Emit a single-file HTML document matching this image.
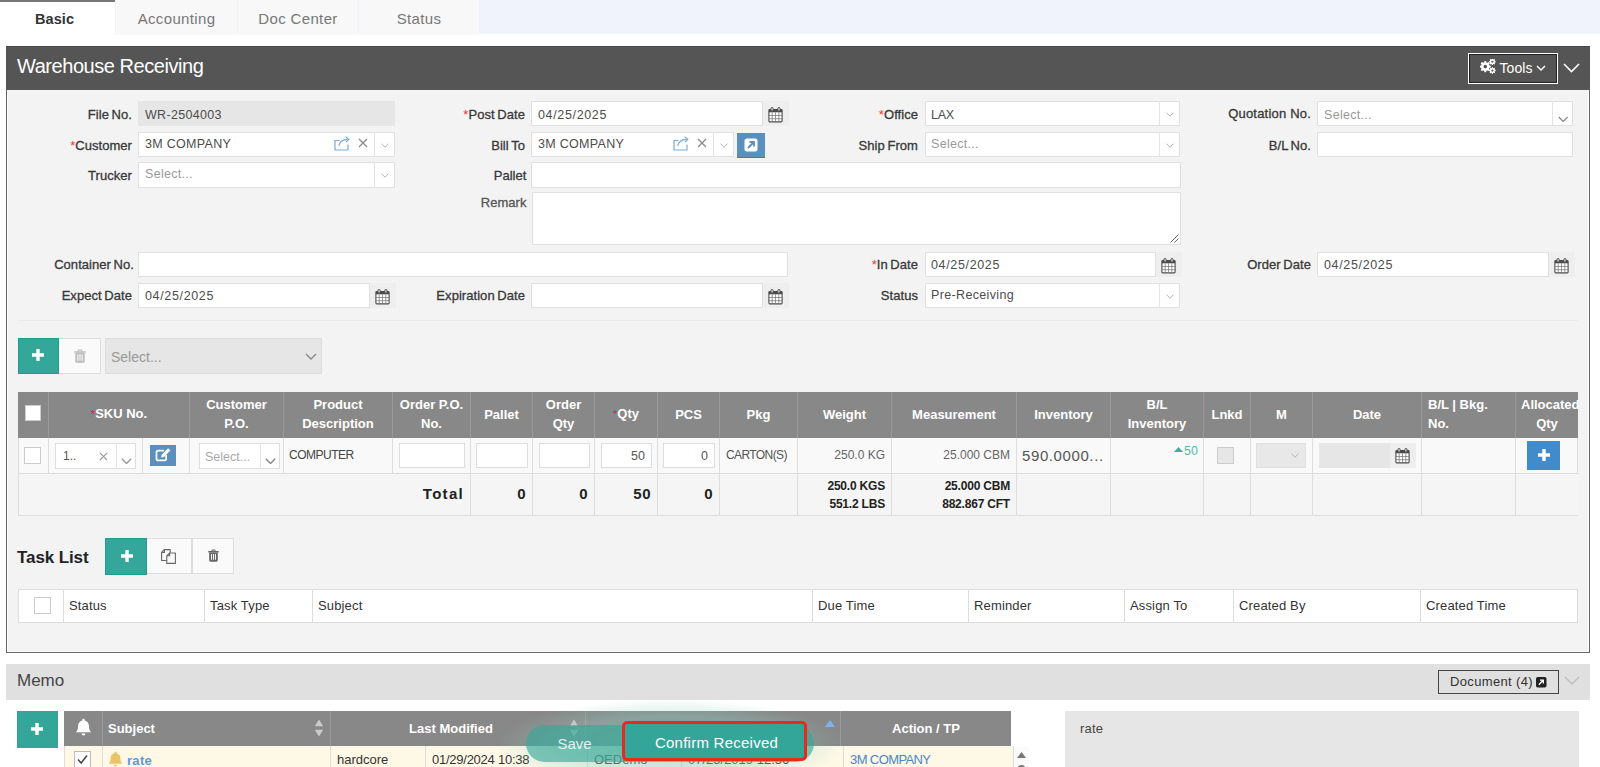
<!DOCTYPE html>
<html>
<head>
<meta charset="utf-8">
<title>Warehouse Receiving</title>
<style>
*{box-sizing:border-box;margin:0;padding:0}
html,body{width:1600px;height:767px;overflow:hidden;background:#fff}
body{font-family:"Liberation Sans",sans-serif;font-size:13px;color:#333;position:relative}
.abs{position:absolute}
#tabbar{left:0;top:0;width:1600px;height:34px;background:#f0f3fb}
.tab{position:absolute;top:0;height:35px;background:#f8f8f8;color:#777;font-size:15px;line-height:38px;text-align:center;letter-spacing:.35px}
.tab.act{background:#fff;color:#333;font-weight:bold;border-top:2px solid #777;line-height:35px;font-size:14.5px;letter-spacing:.1px;padding-right:6px}
#panel{left:6px;top:46px;width:1584px;height:607px;background:#f3f3f3;border:1px solid #666;border-top:0;box-shadow:inset 0 0 0 1px #fff}
#phead{left:6px;top:46px;width:1584px;height:44px;background:#555;border-top:1px solid #484848}
#ptitle{left:17px;top:45px;height:45px;line-height:43px;color:#fff;font-size:20px;letter-spacing:-.45px}
.lb{position:absolute;height:25px;line-height:25px;margin-top:1px;text-align:right;font-size:13px;-webkit-text-stroke:.3px #383838;color:#383838;white-space:nowrap;word-spacing:-1px;letter-spacing:.05px}
.lb i{font-style:normal;color:#e33;-webkit-text-stroke:0}
.in{position:absolute;height:25px;background:#fff;border:1px solid #e0e0e0;font-size:12.5px;line-height:22px;padding-left:6px;padding-top:2px;color:#4c4c4c;white-space:nowrap;overflow:hidden;letter-spacing:.3px}
.in.ro{background:#e6e6e6;border-color:#e6e6e6}
.in.ph{color:#999}
.in.s2{padding-top:0;line-height:22px}
.in.dt{letter-spacing:.65px}
.sel:after{content:"";position:absolute;right:19px;top:0;bottom:0;width:1px;background:#e4e4e4}
.chev{position:absolute;width:8px;height:5px;margin-left:.5px}
.cal{position:absolute;width:26px;height:25px;background:#eee}
.th{position:absolute;top:392px;height:46px;background:#888;color:#fff;font-weight:bold;font-size:13px;line-height:19px;text-align:center;border-left:1px solid #9a9a9a;display:flex;align-items:center;justify-content:center;overflow:hidden;white-space:nowrap;padding-bottom:2px}
.th i{font-style:normal;color:#f06;font-weight:normal;font-size:11px}
.td{position:absolute;top:438px;height:36px;background:#f9f9f9;border-left:1px solid #ddd;border-bottom:1px solid #ddd}
.tx{position:absolute;top:438px;line-height:35px;font-size:12px;white-space:nowrap}
.tf{position:absolute;top:474px;height:42px;background:#f5f5f5;border-left:1px solid #ddd;border-bottom:1px solid #ddd;font-weight:bold;color:#222;white-space:nowrap;overflow:hidden;text-align:right}
.gi{position:absolute;top:443px;height:25px;background:#fff;border:1px solid #ddd;font-size:12.5px;line-height:23px;padding-top:1px;color:#555;text-align:right;padding-right:6px}
.tn{font-size:15px;line-height:40px;padding-right:6px;letter-spacing:.5px}
.tw{font-size:12px;line-height:17.5px;padding-right:6px;padding-top:4px;letter-spacing:-.2px}
.tk{position:absolute;top:589px;height:34px;background:#fff;border:1px solid #ddd;border-left:0;font-size:13px;line-height:32px;color:#333;padding-left:5px;letter-spacing:.15px}
.mh{position:absolute;top:711px;height:35px;background:#888;color:#fff;font-weight:bold;font-size:13px;line-height:35px;border-left:1px solid #9a9a9a;white-space:nowrap}
.mr{position:absolute;top:746px;height:21px;background:#fef8e7;border-left:1px solid #ddd;font-size:13px;line-height:28px;color:#333;white-space:nowrap;overflow:hidden;padding-left:6px}
</style>
</head>
<body>
<svg width="0" height="0" style="position:absolute"><defs>
<symbol id="chev" viewBox="0 0 10 6"><path d="M0.700 0.700 L5 5.200 L9.300 0.700" fill="none" stroke="currentColor" stroke-width="1.100"/></symbol>
<symbol id="chev2" viewBox="0 0 11 6.500"><path d="M0.800 0.800 L5.500 5.500 L10.200 0.800" fill="none" stroke="currentColor" stroke-width="1.400"/></symbol>
<symbol id="xx" viewBox="0 0 10 10"><path d="M1 1 L9 9 M9 1 L1 9" fill="none" stroke="currentColor" stroke-width="1.3"/></symbol>
<symbol id="cal" viewBox="0 0 15 16"><rect x="0.900" y="2.600" width="13.200" height="12.300" rx="0.800" fill="#fff" stroke="#4a4a4a" stroke-width="1.100"/><rect x="0.900" y="2.600" width="13.200" height="2.700" fill="#4a4a4a"/><path d="M4.200 5.300v9.600M7.500 5.300v9.600M10.800 5.300v9.600M0.900 8.500h13.200M0.900 11.700h13.200" stroke="#777" stroke-width="0.750" fill="none"/><rect x="2.900" y="0.500" width="2.300" height="3.700" rx="1.100" fill="#d8d8d8" stroke="#4a4a4a" stroke-width="0.900"/><rect x="9.800" y="0.500" width="2.300" height="3.700" rx="1.100" fill="#d8d8d8" stroke="#4a4a4a" stroke-width="0.900"/></symbol>
<symbol id="ext" viewBox="0 0 16 15"><path d="M14 8.500 V14 H1 V4.500 H5.500" fill="none" stroke="currentColor" stroke-width="1.200"/><path d="M4.800 9.800 C5.500 6 8.500 3.600 13.500 3.300" fill="none" stroke="currentColor" stroke-width="1.200"/><path d="M11.500 0.600 L14.800 3.200 L12 6" fill="none" stroke="currentColor" stroke-width="1.200"/></symbol>
<symbol id="plus" viewBox="0 0 12 12"><path d="M6 0.600v10.800M0.600 6h10.800" stroke="#fff" stroke-width="3.400" stroke-linecap="round" fill="none"/></symbol>
<symbol id="trash" viewBox="0 0 12 14"><path d="M0.300 2.200h11.400v1.500H0.300z M3.800 2.500V1.300Q3.800 0.500 4.600 0.500h2.800Q8.200 0.500 8.200 1.300V2.500h-1.100V1.500H4.900v1z" fill="currentColor"/><path d="M1.300 3.700h9.400v8.600a1.500 1.500 0 0 1-1.500 1.500H2.800a1.500 1.500 0 0 1-1.500-1.500z M3.300 5.300v6.400h1.100V5.300z M5.450 5.300v6.400h1.100V5.300z M7.600 5.300v6.400h1.100V5.300z" fill="currentColor" fill-rule="evenodd"/></symbol>
</defs></svg>
<div id="tabbar" class="abs">
<div class="tab act" style="left:0;width:115px">Basic</div>
<div class="tab" style="left:116px;width:121px">Accounting</div>
<div class="tab" style="left:238px;width:120px">Doc Center</div>
<div class="tab" style="left:359px;width:120px">Status</div>
</div>
<div id="panel" class="abs"></div>
<div id="phead" class="abs"></div>
<div id="ptitle" class="abs">Warehouse Receiving</div>
<div class="abs" style="left:1468px;top:53px;width:90px;height:31px;border:1px solid #fff;box-shadow:inset 0 0 0 1px #222;color:#fff;font-size:14px;line-height:29px;padding-left:30.5px;letter-spacing:.05px">Tools</div>
<svg class="abs" style="left:1480px;top:59px" width="18" height="17" viewBox="0 0 18 17" fill="#fff"><path id="g1" d="M6.5 3.2l.5-1.700h1.800l.5 1.700 1.200.5 1.600-.9 1.300 1.300-.9 1.600.5 1.200 1.700.5v1.800l-1.700.5-.5 1.200.9 1.600-1.300 1.300-1.600-.9-1.200.5-.5 1.700H7l-.5-1.700-1.200-.5-1.600.9-1.300-1.300.9-1.600-.5-1.200-1.700-.5V7.400l1.700-.5.5-1.200-.9-1.600 1.300-1.300 1.600.9zM7.900 6.100a2.200 2.200 0 1 0 0 4.400 2.200 2.200 0 0 0 0-4.400z" transform="translate(-1.200,0.800) scale(.82)"/><use href="#g1" transform="translate(9.200,-1.800) scale(.6)"/><use href="#g1" transform="translate(9.200,7) scale(.6)"/></svg>
<svg class="abs" style="left:1536px;top:65px" width="10" height="7" viewBox="0 0 10 7"><path d="M1 1L5 5L9 1" fill="none" stroke="#fff" stroke-width="1.500"/></svg>
<svg class="abs" style="left:1563px;top:63px" width="17" height="10" viewBox="0 0 17 10"><path d="M1 1L8.500 8.500L16 1" fill="none" stroke="#fff" stroke-width="1.600"/></svg>
<div class="lb" style="left:-68px;width:200px;top:101px;">File No.</div>
<div class="in ro" style="left:138px;top:101px;width:257px;height:25px;">WR-2504003</div>
<div class="lb" style="left:-68px;width:200px;top:132px;"><i>*</i>Customer</div>
<div class="in sel s2" style="left:138px;top:132px;width:257px;height:25px;">3M COMPANY</div>
<svg class="chev" style="left:380px;top:143px;color:#aaa"><use href="#chev"/></svg>
<svg class="abs" style="left:334px;top:135.5px;color:#7aaade" width="16" height="15"><use href="#ext"/></svg>
<svg class="abs" style="left:357.5px;top:138px;color:#8a8a8a" width="10" height="10"><use href="#xx"/></svg>
<div class="lb" style="left:-68px;width:200px;top:162px;">Trucker</div>
<div class="in sel s2 ph" style="left:138px;top:162px;width:257px;height:25px;height:26px;line-height:23px">Select...</div>
<svg class="chev" style="left:380px;top:173px;color:#aaa"><use href="#chev"/></svg>
<div class="lb" style="left:325px;width:200px;top:101px;"><i>*</i>Post Date</div>
<div class="in dt" style="left:531px;top:101px;width:232px;height:25px;">04/25/2025</div>
<div class="cal" style="left:763px;top:101px"><svg style="position:absolute;left:5px;top:5.500px" width="15" height="16"><use href="#cal"/></svg></div>
<div class="lb" style="left:325px;width:200px;top:132px;">Bill To</div>
<div class="in sel s2" style="left:531px;top:132px;width:203px;height:25px;">3M COMPANY</div>
<svg class="chev" style="left:719px;top:143px;color:#aaa"><use href="#chev"/></svg>
<svg class="abs" style="left:673px;top:135.5px;color:#7aaade" width="16" height="15"><use href="#ext"/></svg>
<svg class="abs" style="left:697px;top:138px;color:#8a8a8a" width="10" height="10"><use href="#xx"/></svg>
<div class="abs" style="left:737px;top:133px;width:28px;height:25px;background:#5a8fbe;border-bottom:1px solid #3f7db8"><svg style="position:absolute;left:7px;top:5px" width="14" height="14" viewBox="0 0 14 14"><rect x="0.500" y="0.500" width="13" height="13" rx="2.500" fill="#fff"/><path d="M4 10 L9.500 4.500 M5.500 4 H10 V8.500" stroke="#5a8fbe" stroke-width="1.800" fill="none"/></svg></div>
<div class="lb" style="left:326.5px;width:200px;top:162px;">Pallet</div>
<div class="in " style="left:531px;top:162px;width:650px;height:26px;"></div>
<div class="lb" style="left:326.5px;width:200px;top:189px;color:#555;-webkit-text-stroke-color:#555">Remark</div>
<div class="in " style="left:532px;top:192px;width:649px;height:53px;"></div>
<svg class="abs" style="left:1170px;top:234px" width="9" height="9" viewBox="0 0 9 9"><path d="M0.500 8.500 L8.500 0.500 M4.500 8.500 L8.500 4.500" stroke="#666" stroke-width="1" fill="none"/></svg>
<div class="lb" style="left:718px;width:200px;top:101px;"><i>*</i>Office</div>
<div class="in sel " style="left:925px;top:101px;width:255px;height:25px;padding-left:5px;letter-spacing:-.3px">LAX</div>
<svg class="chev" style="left:1165px;top:112px;color:#aaa"><use href="#chev"/></svg>
<div class="lb" style="left:718px;width:200px;top:132px;">Ship From</div>
<div class="in sel s2 ph" style="left:925px;top:132px;width:255px;height:25px;padding-left:5px">Select...</div>
<svg class="chev" style="left:1165px;top:143px;color:#aaa"><use href="#chev"/></svg>
<div class="lb" style="left:1111px;width:200px;top:100px;word-spacing:0;letter-spacing:.2px">Quotation No.</div>
<div class="in sel ph" style="left:1317px;top:101px;width:256px;height:25px;">Select...</div>
<svg class="abs" style="left:1557.500px;top:115.5px;color:#888" width="10.500" height="6.500"><use href="#chev2"/></svg>
<div class="lb" style="left:1111px;width:200px;top:132px;">B/L No.</div>
<div class="in " style="left:1317px;top:132px;width:256px;height:25px;"></div>
<div class="lb" style="left:-66px;width:200px;top:251px;">Container No.</div>
<div class="in " style="left:138px;top:252px;width:650px;height:25px;"></div>
<div class="lb" style="left:718px;width:200px;top:251px;"><i>*</i>In Date</div>
<div class="in dt" style="left:925px;top:252px;width:231px;height:25px;padding-left:5px;padding-top:1px">04/25/2025</div>
<div class="cal" style="left:1156px;top:252px"><svg style="position:absolute;left:5px;top:5.500px" width="15" height="16"><use href="#cal"/></svg></div>
<div class="lb" style="left:1111px;width:200px;top:251px;">Order Date</div>
<div class="in dt" style="left:1317px;top:252px;width:232px;height:25px;padding-top:1px">04/25/2025</div>
<div class="cal" style="left:1549px;top:252px"><svg style="position:absolute;left:5px;top:5.500px" width="15" height="16"><use href="#cal"/></svg></div>
<div class="lb" style="left:-68px;width:200px;top:282px;">Expect Date</div>
<div class="in dt" style="left:138px;top:283px;width:232px;height:25px;padding-top:1px">04/25/2025</div>
<div class="cal" style="left:370px;top:283px"><svg style="position:absolute;left:5px;top:5.500px" width="15" height="16"><use href="#cal"/></svg></div>
<div class="lb" style="left:325px;width:200px;top:282px;">Expiration Date</div>
<div class="in " style="left:531px;top:283px;width:232px;height:25px;"></div>
<div class="cal" style="left:763px;top:283px"><svg style="position:absolute;left:5px;top:5.500px" width="15" height="16"><use href="#cal"/></svg></div>
<div class="lb" style="left:718px;width:200px;top:282px;">Status</div>
<div class="in sel s2" style="left:925px;top:283px;width:255px;height:25px;padding-left:5px;letter-spacing:.35px">Pre-Receiving</div>
<svg class="chev" style="left:1165px;top:294px;color:#aaa"><use href="#chev"/></svg>
<div class="abs" style="left:18px;top:320px;width:1560px;height:1px;background:#ebebeb"></div>
<div class="abs" style="left:18px;top:338px;width:41px;height:36px;background:#35a69a;border:1px solid #1f9d8e"><svg style="position:absolute;left:13px;top:10px" width="12" height="12"><use href="#plus"/></svg></div>
<div class="abs" style="left:59px;top:338px;width:42px;height:36px;background:#fafafa;border:1px solid #ddd;border-left:0"><svg style="position:absolute;left:14.5px;top:10px;color:#bdbdbd" width="12" height="14"><use href="#trash"/></svg></div>
<div class="abs" style="left:105px;top:338px;width:217px;height:36px;background:#e6e6e6;border:1px solid #ddd;color:#999;font-size:14px;line-height:37px;padding-left:5px;letter-spacing:0">Select...</div>
<svg class="abs" style="left:305px;top:353px;color:#888" width="12" height="7" viewBox="0 0 12 7"><path d="M1 1 L6 6 L11 1" fill="none" stroke="currentColor" stroke-width="1.400"/></svg>
<div class="th" style="left:18px;width:30px;border-left:0;"></div>
<div class="th" style="left:48px;width:141px;"><span><i>*</i>SKU No.</span></div>
<div class="th" style="left:189px;width:94px;">Customer<br>P.O.</div>
<div class="th" style="left:283px;width:109px;">Product<br>Description</div>
<div class="th" style="left:392px;width:78px;">Order P.O.<br>No.</div>
<div class="th" style="left:470px;width:62px;">Pallet</div>
<div class="th" style="left:532px;width:62px;">Order<br>Qty</div>
<div class="th" style="left:594px;width:63px;"><span><i>*</i>Qty</span></div>
<div class="th" style="left:657px;width:62px;">PCS</div>
<div class="th" style="left:719px;width:78px;">Pkg</div>
<div class="th" style="left:797px;width:94px;">Weight</div>
<div class="th" style="left:891px;width:125px;">Measurement</div>
<div class="th" style="left:1016px;width:94px;">Inventory</div>
<div class="th" style="left:1110px;width:93px;">B/L<br>Inventory</div>
<div class="th" style="left:1203px;width:47px;">Lnkd</div>
<div class="th" style="left:1250px;width:62px;">M</div>
<div class="th" style="left:1312px;width:109px;">Date</div>
<div class="th" style="left:1421px;width:94px;"><div style="text-align:left;width:100%;padding-left:6px">B/L | Bkg.<br>No.</div></div>
<div class="th" style="left:1515px;width:63px;justify-content:flex-start;padding-left:5px;"><div style="flex-shrink:0;width:52px;text-align:center">Allocated<br>Qty</div></div>
<div class="abs" style="left:25px;top:405px;width:16px;height:16px;background:#fff;border:1px solid #ccc"></div>
<div class="td" style="left:18px;width:30px"></div>
<div class="td" style="left:48px;width:141px"></div>
<div class="td" style="left:189px;width:94px"></div>
<div class="td" style="left:283px;width:109px"></div>
<div class="td" style="left:392px;width:78px"></div>
<div class="td" style="left:470px;width:62px"></div>
<div class="td" style="left:532px;width:62px"></div>
<div class="td" style="left:594px;width:63px"></div>
<div class="td" style="left:657px;width:62px"></div>
<div class="td" style="left:719px;width:78px"></div>
<div class="td" style="left:797px;width:94px"></div>
<div class="td" style="left:891px;width:125px"></div>
<div class="td" style="left:1016px;width:94px"></div>
<div class="td" style="left:1110px;width:93px"></div>
<div class="td" style="left:1203px;width:47px"></div>
<div class="td" style="left:1250px;width:62px"></div>
<div class="td" style="left:1312px;width:109px"></div>
<div class="td" style="left:1421px;width:94px"></div>
<div class="td" style="left:1515px;width:63px"></div>
<div class="abs" style="left:142px;top:438px;width:1px;height:36px;background:#ddd"></div>
<div class="abs" style="left:1577px;top:438px;width:1px;height:78px;background:#ddd"></div>
<div class="abs" style="left:24px;top:447px;width:17px;height:17px;background:#fff;border:1px solid #ccc"></div>
<div class="gi" style="left:55px;width:81px;height:26px;text-align:left;padding-left:7px;font-size:12px">1..</div>
<div class="abs" style="left:116px;top:444px;width:1px;height:24px;background:#e4e4e4"></div>
<svg class="abs" style="left:98.5px;top:452px;color:#999" width="9" height="9"><use href="#xx"/></svg>
<svg class="abs" style="left:120.5px;top:457.5px;color:#999" width="11" height="6.500"><use href="#chev2"/></svg>
<div class="abs" style="left:150px;top:445px;width:26px;height:21px;background:#5a8fbe"><svg style="position:absolute;left:4.5px;top:1.5px" width="17" height="15" viewBox="0 0 16 14"><path d="M10.500 7.500V11a1.600 1.600 0 0 1-1.600 1.600H3A1.600 1.600 0 0 1 1.400 11V5A1.600 1.600 0 0 1 3 3.400h5.500" fill="none" stroke="#fff" stroke-width="1.600"/><path d="M5.800 9.800l.5-2.600 6-6 2.100 2.100-6 6z" fill="#fff"/></svg></div>
<div class="gi" style="left:199px;width:81px;height:26px;text-align:left;padding-left:5px;color:#aaa;padding-top:2px">Select...</div>
<div class="abs" style="left:260px;top:444px;width:1px;height:24px;background:#e4e4e4"></div>
<svg class="abs" style="left:264.5px;top:457.5px;color:#888" width="11" height="6.500"><use href="#chev2"/></svg>
<div class="tx" style="left:289px;color:#444;letter-spacing:-.5px">COMPUTER</div>
<div class="gi" style="left:399px;width:66px"></div>
<div class="gi" style="left:476px;width:52px"></div>
<div class="gi" style="left:539px;width:51px"></div>
<div class="gi" style="left:601px;width:51px">50</div>
<div class="gi" style="left:663px;width:52px">0</div>
<div class="tx" style="left:726px;color:#555;letter-spacing:-.6px">CARTON(S)</div>
<div class="tx" style="left:797px;width:88px;text-align:right;color:#666">250.0 KG</div>
<div class="tx" style="left:891px;width:119px;text-align:right;color:#666">25.000 CBM</div>
<div class="tx" style="left:1022px;font-size:15px;color:#555;letter-spacing:.6px">590.0000...</div>
<div class="abs" style="left:1110px;width:88px;text-align:right;top:442px;line-height:18px;font-size:12.5px;color:#5cb8a7"><svg width="9" height="5" viewBox="0 0 9 5" style="margin-right:1px;position:relative;top:-3px"><path d="M0 5L4.500 0L9 5z" fill="#3fae9c"/></svg>50</div>
<div class="abs" style="left:1217px;top:447px;width:17px;height:17px;background:#e6e6e6;border:1px solid #ccc"></div>
<div class="abs" style="left:1256px;top:443px;width:50px;height:25px;background:#e8e8e8;border:1px solid #e0e0e0"></div>
<svg class="abs" style="left:1291px;top:453px;color:#aaa" width="8" height="5"><use href="#chev"/></svg>
<div class="abs" style="left:1319px;top:443px;width:71px;height:25px;background:#e6e6e6"></div>
<div class="cal" style="left:1390px;top:443px"><svg style="position:absolute;left:5px;top:5px" width="15" height="16"><use href="#cal"/></svg></div>
<div class="abs" style="left:1527px;top:441px;width:33px;height:29px;background:#428bca"><svg style="position:absolute;left:11px;top:8px" width="12" height="12"><use href="#plus"/></svg></div>
<div class="tf" style="left:18px;width:452px"><span style="font-size:15px;letter-spacing:1.300px;line-height:40px;padding-right:6px">Total</span></div>
<div class="tf" style="left:470px;width:62px"><span class="tn">0</span></div>
<div class="tf" style="left:532px;width:62px"><span class="tn">0</span></div>
<div class="tf" style="left:594px;width:63px"><span class="tn">50</span></div>
<div class="tf" style="left:657px;width:62px"><span class="tn">0</span></div>
<div class="tf" style="left:719px;width:78px"></div>
<div class="tf" style="left:797px;width:94px"><div class="tw">250.0 KGS<br>551.2 LBS</div></div>
<div class="tf" style="left:891px;width:125px"><div class="tw">25.000 CBM<br>882.867 CFT</div></div>
<div class="tf" style="left:1016px;width:94px"></div>
<div class="tf" style="left:1110px;width:93px"></div>
<div class="tf" style="left:1203px;width:47px"></div>
<div class="tf" style="left:1250px;width:62px"></div>
<div class="tf" style="left:1312px;width:109px"></div>
<div class="tf" style="left:1421px;width:94px"></div>
<div class="tf" style="left:1515px;width:63px"></div>
<div class="abs" style="left:17px;top:538px;height:36px;line-height:40px;font-size:17px;font-weight:bold;color:#222;letter-spacing:-.1px">Task List</div>
<div class="abs" style="left:105px;top:538px;width:42px;height:37px;background:#35a69a;border:1px solid #1f9d8e"><svg style="position:absolute;left:14.500px;top:10.500px" width="12" height="12"><use href="#plus"/></svg></div>
<div class="abs" style="left:147px;top:538px;width:45px;height:36px;background:#fafafa;border:1px solid #ddd;border-left:0"><svg style="position:absolute;left:14px;top:10.400px" width="15" height="15" viewBox="0 0 15 15" fill="none" stroke="#666" stroke-width="1.100" stroke-linejoin="round"><path d="M9.200 3.800V0.600H3.400L0.600 3.400V11.500H5.600"/><path d="M3.400 0.600V3.400H0.600"/><path d="M8.600 4H14.400V14.400H5.800V6.800z"/><path d="M8.600 4V6.800H5.800"/></svg></div>
<div class="abs" style="left:192px;top:538px;width:42px;height:36px;background:#fafafa;border:1px solid #ddd"><svg style="position:absolute;left:14.500px;top:10px;color:#666" width="11" height="13"><use href="#trash"/></svg></div>
<div class="tk" style="left:18px;width:46px;border-left:1px solid #ddd;"></div>
<div class="tk" style="left:64px;width:141px;">Status</div>
<div class="tk" style="left:205px;width:108px;">Task Type</div>
<div class="tk" style="left:313px;width:500px;">Subject</div>
<div class="tk" style="left:813px;width:156px;">Due Time</div>
<div class="tk" style="left:969px;width:156px;">Reminder</div>
<div class="tk" style="left:1125px;width:109px;">Assign To</div>
<div class="tk" style="left:1234px;width:187px;">Created By</div>
<div class="tk" style="left:1421px;width:157px;">Created Time</div>
<div class="abs" style="left:34px;top:597px;width:17px;height:17px;background:#fff;border:1px solid #ccc"></div>
<div class="abs" style="left:6px;top:664px;width:1584px;height:36px;background:#e0e0e0"></div>
<div class="abs" style="left:17px;top:664px;height:35px;line-height:33px;font-size:17px;color:#444">Memo</div>
<div class="abs" style="left:1438px;top:670px;width:121px;height:24px;border:1px solid #444;font-size:13px;line-height:22px;color:#333;padding-left:11px;letter-spacing:.35px">Document (4)</div>
<svg class="abs" style="left:1536px;top:677px" width="10.5" height="10.5" viewBox="0 0 12 12"><rect width="12" height="12" rx="2" fill="#222"/><path d="M3.200 8.800L8 4 M4.600 3.600H8.400V7.400" stroke="#fff" stroke-width="1.500" fill="none"/></svg>
<svg class="abs" style="left:1564px;top:676px;color:#bbb" width="16" height="9" viewBox="0 0 16 9"><path d="M1 1L8 8L15 1" fill="none" stroke="currentColor" stroke-width="1.300"/></svg>
<div class="abs" style="left:17px;top:711px;width:41px;height:37px;background:#33a699"><svg style="position:absolute;left:14px;top:12px" width="12" height="12"><use href="#plus"/></svg></div>
<div class="mh" style="left:64px;width:38px;border-left:0;"></div>
<div class="mh" style="left:102px;width:228px;"><span style="padding-left:5px">Subject</span></div>
<div class="mh" style="left:330px;width:255px;"><div style="text-align:center;width:240px">Last Modified</div></div>
<div class="mh" style="left:585px;width:255px;"></div>
<div class="mh" style="left:840px;width:171px;"><div style="text-align:center">Action / TP</div></div>
<svg class="abs" style="left:74px;top:718px" width="19" height="19" viewBox="0 0 16 16" fill="#fff"><path d="M8 0.600c.6 0 1 .4 1 1v.5c2.300.5 3.600 2.400 3.600 4.800 0 2.600.7 4 1.900 5.100H1.500C2.700 10.900 3.400 9.500 3.400 6.900c0-2.400 1.300-4.300 3.600-4.800V1.600c0-.6.400-1 1-1zM6.300 13h3.400a1.700 1.700 0 0 1-3.400 0z"/></svg>
<svg class="abs" style="left:314px;top:719px" width="10" height="18" viewBox="0 0 8 15" fill="#ccc"><path d="M0.500 6L4 0.500L7.500 6z M0.500 9L4 14.500L7.500 9z"/></svg>
<svg class="abs" style="left:569px;top:719px" width="10" height="18" viewBox="0 0 8 15" fill="#ccc"><path d="M0.500 6L4 0.500L7.500 6z M0.500 9L4 14.500L7.500 9z"/></svg>
<svg class="abs" style="left:825px;top:720px" width="10" height="7" viewBox="0 0 10 7"><path d="M0 7L5 0L10 7z" fill="#7db3f2"/></svg>
<div class="mr" style="left:64px;width:38px"></div>
<div class="mr" style="left:102px;width:228px"></div>
<div class="mr" style="left:330px;width:95px">hardcore</div>
<div class="mr" style="left:425px;width:162px"><span style="letter-spacing:-.25px">01/29/2024 10:38</span></div>
<div class="mr" style="left:587px;width:94px">OEDemo</div>
<div class="mr" style="left:681px;width:162px">07/25/2019 12:56</div>
<div class="mr" style="left:843px;width:171px"><span style="color:#4a86c5;letter-spacing:-.6px">3M COMPANY</span></div>
<div class="abs" style="left:1013px;top:746px;width:1px;height:21px;background:#ddd"></div>
<div class="abs" style="left:74px;top:751px;width:17px;height:17px;background:#fff;border:1px solid #bbb"><svg width="15" height="15" viewBox="0 0 15 15"><path d="M3 7.500L6.200 11L12 3.500" fill="none" stroke="#444" stroke-width="1.500"/></svg></div>
<svg class="abs" style="left:107px;top:751px" width="17" height="17" viewBox="0 0 16 16" fill="#e9c46a"><path d="M8 0.600c.6 0 1 .4 1 1v.5c2.300.5 3.600 2.400 3.600 4.800 0 2.600.7 4 1.900 5.100H1.500C2.700 10.900 3.400 9.500 3.400 6.900c0-2.400 1.300-4.300 3.600-4.800V1.600c0-.6.400-1 1-1zM6.300 13h3.400a1.700 1.700 0 0 1-3.400 0z"/></svg>
<div class="abs" style="left:127px;top:746px;line-height:29px;font-size:13px;font-weight:bold;color:#5b9bd5;letter-spacing:.3px">rate</div>
<div class="abs" style="left:1014px;top:747px;width:15px;height:20px;background:#fafafa"></div><svg class="abs" style="left:1017px;top:752px" width="9" height="18" viewBox="0 0 9 18" fill="#777"><path d="M0 6L4.500 0L9 6z"/><circle cx="4.500" cy="17" r="4"/></svg>
<div class="abs" style="left:1065px;top:711px;width:514px;height:56px;background:#e6e6e6"></div>
<div class="abs" style="left:1080px;top:719px;font-size:13px;line-height:20px;color:#444;letter-spacing:.2px">rate</div>
<div class="abs" style="left:500px;top:700px;width:340px;height:90px;background:radial-gradient(ellipse at center, rgba(120,200,180,.55) 0%, rgba(140,210,190,.35) 45%, rgba(255,255,255,0) 72%)"></div>
<div class="abs" style="left:526px;top:725px;width:288px;height:37px;border-radius:18.500px;background:rgba(51,166,153,.62)"></div>
<div class="abs" style="left:526px;top:725px;width:97px;height:37px;line-height:38px;text-align:center;color:rgba(255,255,255,.85);font-size:15px">Save</div>
<div class="abs" style="left:622px;top:721px;width:185px;height:40px;border:3px solid #e8291c;border-radius:5px;background:#33a699;color:#fff;font-size:15px;line-height:36px;padding-top:1px;text-align:center;letter-spacing:.25px;padding-left:4px">Confirm Received</div>
</body>
</html>
